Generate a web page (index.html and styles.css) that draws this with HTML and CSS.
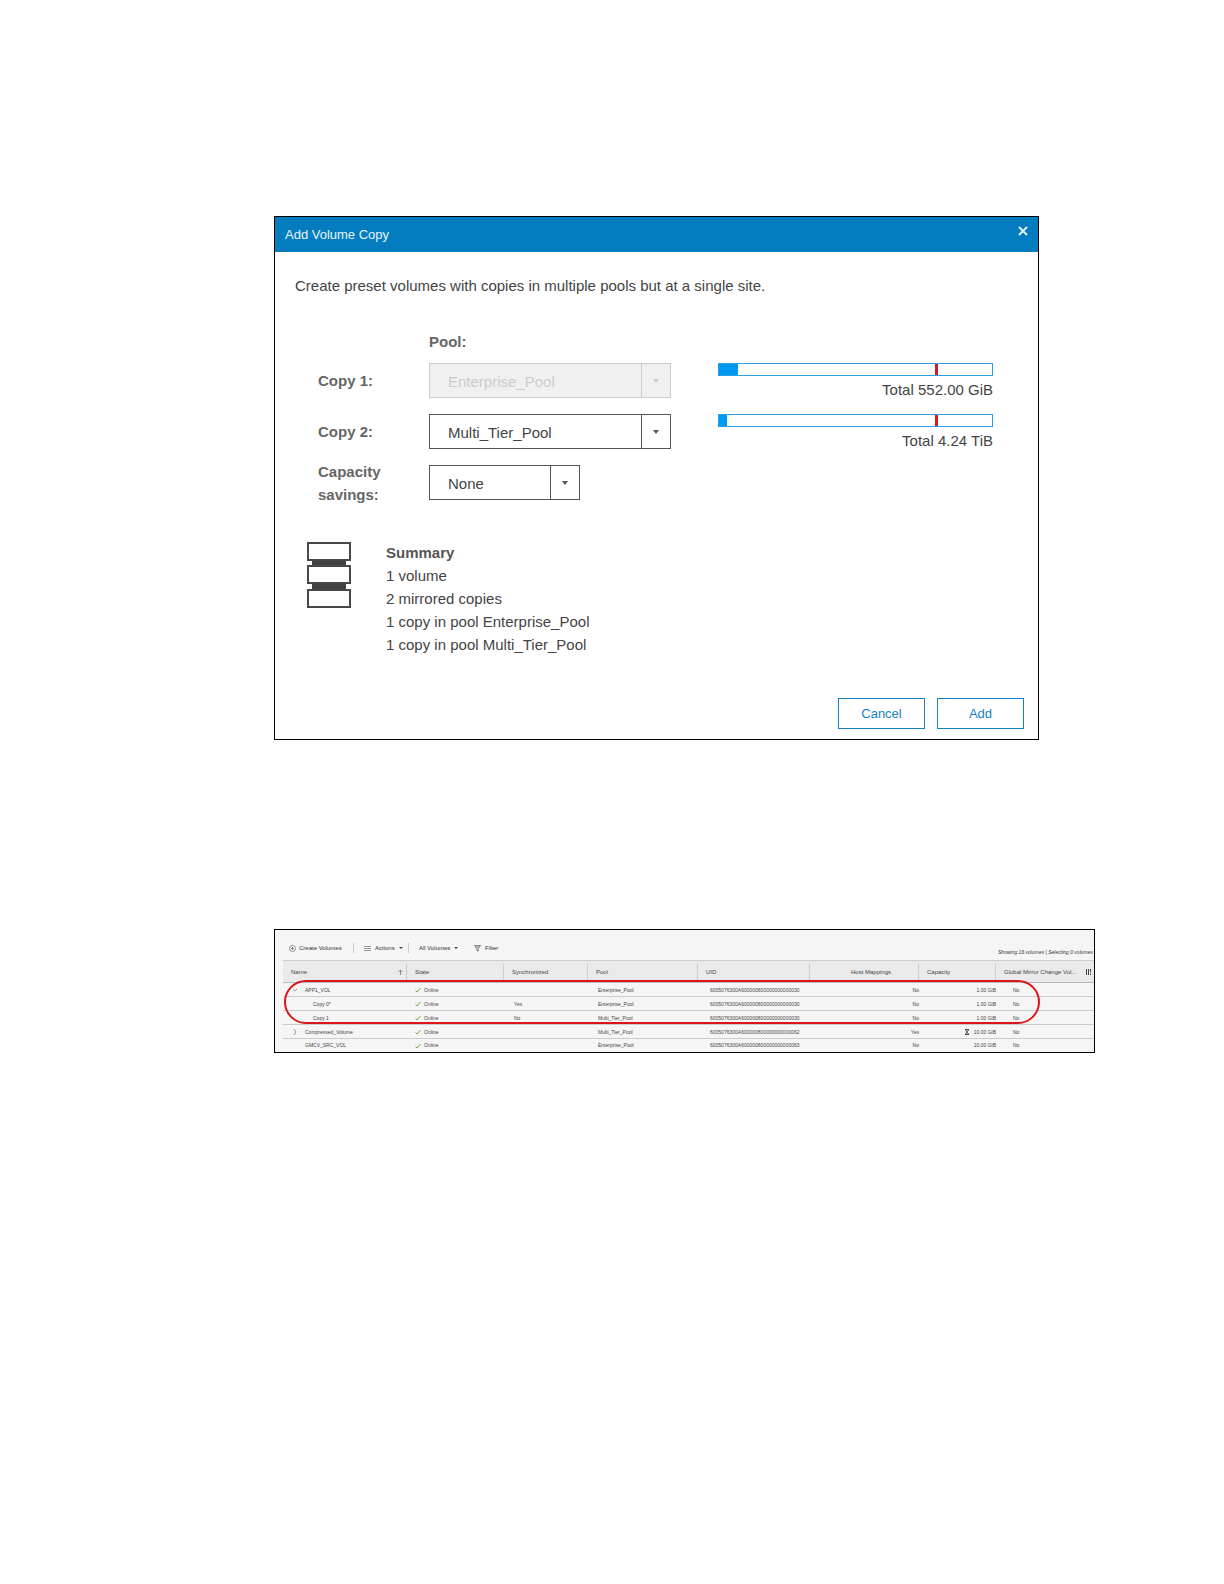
FILE: index.html
```html
<!DOCTYPE html>
<html lang="en">
<head>
<meta charset="utf-8">
<title>Add Volume Copy</title>
<link rel="stylesheet" href="styles.css">
</head>
<body>
<main class="page">
  <section class="dialog" aria-labelledby="dialog-title">
    <header class="dialog-header">
      <h1 class="dialog-title" id="dialog-title">Add Volume Copy</h1>
      <button class="close" type="button" aria-label="Close">
        <svg width="10" height="10" viewBox="0 0 10 10"><path d="M1 1L9 9M9 1L1 9" stroke="#e4f3fb" stroke-width="2" fill="none"/></svg>
      </button>
    </header>
    <form class="dialog-body">
      <p class="intro">Create preset volumes with copies in multiple pools but at a single site.</p>
      <div class="fields">
        <span class="pool-heading">Pool:</span>
        <label class="label" for="copy1">Copy 1:</label>
        <div class="select disabled">
          <select id="copy1" disabled><option>Enterprise_Pool</option></select>
          <span class="arrow"></span>
        </div>
        <div class="usage">
          <div class="meter"><div class="used" style="width:7%"></div><div class="limit"></div></div>
          <span class="total">Total 552.00 GiB</span>
        </div>
        <label class="label" for="copy2">Copy 2:</label>
        <div class="select">
          <select id="copy2"><option>Multi_Tier_Pool</option></select>
          <span class="arrow"></span>
        </div>
        <div class="usage">
          <div class="meter"><div class="used" style="width:3%"></div><div class="limit"></div></div>
          <span class="total">Total 4.24 TiB</span>
        </div>
        <label class="label savings" for="savings">Capacity savings:</label>
        <div class="select short">
          <select id="savings"><option>None</option></select>
          <span class="arrow"></span>
        </div>
      </div>
      <div class="summary">
        <svg class="stack" width="44" height="66" viewBox="0 0 44 66">
          <path d="M5 18h34v6H5zM5 42h34v6H5z" fill="#424242"/>
          <path d="M1 1h42v17H1zM1 24h42v17H1zM1 48h42v17H1z" fill="#fff" stroke="#484848" stroke-width="2"/>
        </svg>
        <div>
          <h2 class="summary-title">Summary</h2>
          <p class="line">1 volume</p>
          <p class="line">2 mirrored copies</p>
          <p class="line">1 copy in pool Enterprise_Pool</p>
          <p class="line">1 copy in pool Multi_Tier_Pool</p>
        </div>
      </div>
      <div class="actions">
        <button class="button" type="button">Cancel</button>
        <button class="button" type="submit">Add</button>
      </div>
    </form>
  </section>

  <section class="volumes">
    <div class="toolbar">
      <button class="tool create" type="button">
        <svg width="7" height="7" viewBox="0 0 7 7" fill="none" stroke="#555"><circle cx="3.500" cy="3.500" r="3" stroke-width=".6"/><path d="M3.500 2v3M2 3.500h3" stroke-width=".6"/></svg>
        Create Volumes</button>
      <button class="tool menu" type="button">
        <svg width="7" height="7" viewBox="0 0 7 7"><path d="M0 1.500h7M0 3.500h7M0 5.500h7" stroke="#999"/></svg>
        Actions <span class="caret"></span></button>
      <button class="tool menu scope" type="button">All Volumes <span class="caret"></span></button>
      <button class="tool" type="button">
        <svg width="7" height="7" viewBox="0 0 7 7"><path d="M.5.5h6L4.200 3.500v2.700l-1.400-.8V3.500zM1.500 2h4" stroke="#555" stroke-width=".7" fill="none"/></svg>
        Filter</button>
      <span class="status">Showing 16 volumes | Selecting 0 volumes</span>
    </div>
    <div class="table-wrap">
      <table class="grid">
        <colgroup><col class="c-name"><col class="c-state"><col class="c-sync"><col class="c-pool"><col class="c-uid"><col class="c-host"><col class="c-cap"><col class="c-mirror"></colgroup>
        <thead>
          <tr>
            <th><span class="sort">Name <svg width="5" height="6" viewBox="0 0 5 6"><path d="M2.500 6V1M.5 3l2-2 2 2" stroke="#777" stroke-width=".8" fill="none"/></svg></span></th>
            <th>State</th><th>Synchronized</th><th>Pool</th><th>UID</th><th class="right">Host Mappings</th><th>Capacity</th>
            <th><span class="sort last">Global Mirror Change Vol... <svg width="6" height="6" viewBox="0 0 6 6"><path d="M.5 0v6M2.500 0v6M4.500 0v3.500M4.500 4.500v1.500" stroke="#444"/></svg></span></th>
          </tr>
        </thead>
        <tbody>
          <tr><td><svg class="twist" width="4" height="6" viewBox="0 0 4 6"><path d="M0 2l2 2 2-2"/></svg>APP1_VOL</td><td><svg class="check" width="6" height="6" viewBox="0 0 6 6"><path d="M.5 3.500L2 5 5.500 1"/></svg>Online</td><td></td><td>Enterprise_Pool</td><td>6005076300A600000800000000000030</td><td class="right">No</td><td class="right">1.00 GiB</td><td>No</td></tr>
          <tr><td class="child">Copy 0*</td><td><svg class="check" width="6" height="6" viewBox="0 0 6 6"><path d="M.5 3.500L2 5 5.500 1"/></svg>Online</td><td>Yes</td><td>Enterprise_Pool</td><td>6005076300A600000800000000000030</td><td class="right">No</td><td class="right">1.00 GiB</td><td>No</td></tr>
          <tr><td class="child">Copy 1</td><td><svg class="check" width="6" height="6" viewBox="0 0 6 6"><path d="M.5 3.500L2 5 5.500 1"/></svg>Online</td><td>No</td><td>Multi_Tier_Pool</td><td>6005076300A600000800000000000030</td><td class="right">No</td><td class="right">1.00 GiB</td><td>No</td></tr>
          <tr><td><svg class="twist" width="4" height="6" viewBox="0 0 4 6"><path d="M1 0l2 3-2 3"/></svg>Compressed_Volume</td><td><svg class="check" width="6" height="6" viewBox="0 0 6 6"><path d="M.5 3.500L2 5 5.500 1"/></svg>Online</td><td></td><td>Multi_Tier_Pool</td><td>6005076300A600000800000000000062</td><td class="right">Yes</td><td class="right"><svg class="hourglass" width="4" height="6" viewBox="0 0 4 6"><path d="M0 .5h4M0 5.500h4M.5 1l3 4M3.500 1l-3 4" stroke="#444" fill="none"/><path d="M1 3h2" stroke="#c55"/></svg>10.00 GiB</td><td>No</td></tr>
          <tr><td class="leaf">GMCV_SRC_VOL</td><td><svg class="check" width="6" height="6" viewBox="0 0 6 6"><path d="M.5 3.500L2 5 5.500 1"/></svg>Online</td><td></td><td>Enterprise_Pool</td><td>6005076300A600000800000000000063</td><td class="right">No</td><td class="right">10.00 GiB</td><td>No</td></tr>
        </tbody>
      </table>
      <div class="highlight"></div>
    </div>
  </section>
</main>
</body>
</html>
```
FILE: styles.css
```css
* { box-sizing: border-box; }
body {
  margin: 0;
  background: #fff;
  color: #444;
  font-family: "Liberation Sans", Arial, sans-serif;
}
h1, h2, p { margin: 0; }
button, select { font-family: inherit; color: inherit; border: 0; background: none; padding: 0; }
.page { padding: 216px 129px 120px 274px; }

/* Add Volume Copy dialog */
.dialog { margin-right: 56px; border: 1px solid #000; }
.dialog-header {
  display: flex;
  justify-content: space-between;
  align-items: flex-start;
  height: 35px;
  padding: 9px 10px 0;
  background: #047cc0;
  color: #e8f5fc;
}
.dialog-title { font-size: 13px; line-height: 18px; font-weight: 400; }
.close { display: flex; }
.dialog-body { padding: 24px 14px 10px; }
.intro { padding-left: 6px; font-size: 15px; line-height: 20px; }
.fields {
  display: grid;
  grid-template-columns: 111px 242px 1fr;
  row-gap: 16px;
  padding: 36px 31px 0 29px;
}
.pool-heading { grid-column: 2 / 4; margin-bottom: -5px; font-size: 15px; line-height: 20px; font-weight: 700; color: #666; }
.label { font-size: 15px; line-height: 23px; font-weight: 700; color: #666; align-self: center; }
.savings { width: 80px; margin: -6px 0; }
.select { position: relative; height: 35px; border: 1px solid #555; }
.select select { width: 100%; height: 100%; padding: 2px 48px 0 18px; font-size: 15px; appearance: none; }
.arrow {
  position: absolute;
  inset: 0 0 0 auto;
  display: grid;
  place-items: center;
  width: 29px;
  border-left: 1px solid #555;
  pointer-events: none;
}
.arrow::after { content: ""; border: 3px solid transparent; border-top: 4px solid #555; border-bottom: 0; }
.disabled, .disabled .arrow { border-color: #ccc; }
.disabled { background: #f0f0f0; }
.disabled select { color: #ccc; opacity: 1; }
.disabled .arrow::after { border-top-color: #ccc; }
.short { width: 151px; }
.usage { padding: 0 0 0 47px; height: 35px; text-align: right; }
.meter { position: relative; height: 13px; border: 1px solid #2d9fe0; }
.used { height: 100%; background: #0099f0; }
.limit { position: absolute; top: 0; bottom: 0; left: 79%; width: 3px; background: #d71920; }
.total { font-size: 15px; line-height: 28px; }
.summary { display: flex; gap: 35px; padding: 41px 0 0 18px; }
.stack { margin-top: 1px; }
.summary-title, .line { font-size: 15px; line-height: 23px; }
.summary-title { color: #555; }
.actions { display: flex; justify-content: flex-end; gap: 12px; padding-top: 42px; }
.button { width: 87px; height: 31px; border: 1px solid #1680c2; color: #1680c2; font-size: 13px; }

/* Volume list */
.volumes { margin-top: 189px; padding-left: 8px; border: 1px solid #000; background: #f5f5f5; }
.toolbar { display: flex; align-items: center; height: 30px; padding-top: 6px; }
.tool { display: flex; flex: none; align-items: center; gap: 4px; height: 10px; font-size: 6px; line-height: 10px; color: #333; white-space: nowrap; }
.create { width: 64px; margin-left: 6px; gap: 3px; }
.menu { width: 55px; padding-left: 10px; border-left: 1px solid #ccc; }
.scope { width: 66px; }
.caret { border: 2px solid transparent; border-top-color: #444; border-bottom: 0; }
.status { margin-left: auto; padding: 8px 1px 0 0; font-size: 5px; line-height: 8px; font-style: italic; color: #333; }
.table-wrap { position: relative; }
.grid { width: 100%; border-collapse: collapse; table-layout: fixed; font-size: 5px; line-height: 8px; }
.grid th { height: 22px; padding: 0 0 0 8px; border-top: 1px solid #ccc; border-bottom: 1px solid #bbb; background: linear-gradient(#ccc, #ccc) right center / 1px 16px no-repeat #eaeaea; font-size: 6px; font-weight: 400; text-align: left; white-space: nowrap; }
.grid th:last-child { background: #eaeaea; }
.grid td { height: 14px; padding: 0 0 0 10px; border-bottom: 1px solid #ccc; white-space: nowrap; }
.grid tbody tr:last-child td { height: 13px; border-bottom: 0; }
.grid td:nth-child(2) { padding-left: 8px; }
.grid td:nth-child(5) { padding-left: 12px; }
.grid td.child { padding-left: 30px; }
.grid td.leaf { padding-left: 22px; }
.grid .right { padding-right: 0; text-align: right; }
.grid th.right { padding-right: 28px; }
.grid td:nth-child(8) { padding-left: 17px; }
.sort { display: flex; align-items: center; justify-content: space-between; padding-right: 4px; }
.last { padding-right: 2px; }
.c-name { width: 124px; }
.c-state { width: 97px; }
.c-sync { width: 84px; }
.c-pool { width: 110px; }
.c-uid { width: 112px; }
.c-host { width: 109px; }
.c-cap { width: 77px; }
.twist { margin-right: 8px; fill: none; stroke: #999; stroke-width: 1; vertical-align: middle; }
.check { margin-right: 3px; fill: none; stroke: #74a832; stroke-width: 1; vertical-align: middle; }
.hourglass { margin-right: 5px; vertical-align: middle; }
.highlight { position: absolute; top: 20px; left: 1px; right: 54px; height: 44px; border: 2px solid #d9161a; border-radius: 22px; }
```
